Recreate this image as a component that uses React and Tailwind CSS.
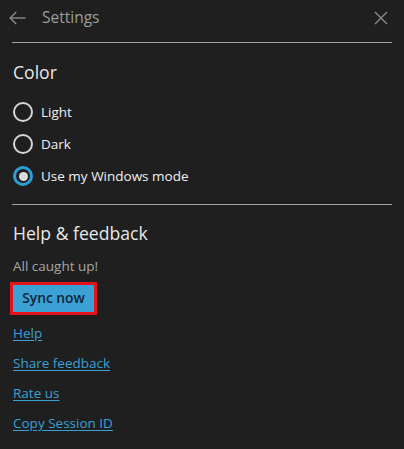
import React, { useState } from "react";

const BackArrow = () => (
  <svg width="17" height="14" viewBox="0 0 17 14" fill="none" stroke="#8c8c8c" strokeWidth="1.4">
    <path d="M16.5 7H1.2" />
    <path d="M7.2 1L1.2 7l6 6" />
  </svg>
);

const CloseIcon = () => (
  <svg width="14" height="14" viewBox="0 0 14 14" fill="none" stroke="#8c8c8c" strokeWidth="1.4">
    <path d="M1 1l12 12M13 1L1 13" />
  </svg>
);

const Radio = ({ checked }) =>
  checked ? (
    <div className="w-5 h-5 rounded-full border-[3px] border-[#2d9fd2] flex items-center justify-center">
      <div className="w-[9px] h-[9px] rounded-full bg-[#dcdcdc]" />
    </div>
  ) : (
    <div className="w-5 h-5 rounded-full border-2 border-[#d6d6d6]" />
  );

const App = () => {
  const [mode, setMode] = useState("windows");

  const options = [
    { key: "light", label: "Light" },
    { key: "dark", label: "Dark" },
    { key: "windows", label: "Use my Windows mode" },
  ];

  const links = ["Help", "Share feedback", "Rate us", "Copy Session ID"];

  return (
    <div className="w-[404px] h-[449px] bg-[#1f1f1f] font-['Open_Sans',sans-serif] overflow-hidden">
      {/* header */}
      <div className="h-9 flex items-center">
        <div className="w-[42px] flex items-center pl-[9px]">
          <BackArrow />
        </div>
        <div className="flex-1 h-full flex items-center text-[15.5px] text-[#9c9c9c]">
          Settings
        </div>
        <div className="w-9 h-full flex items-center justify-center mr-[5px]">
          <CloseIcon />
        </div>
      </div>
      <div className="mt-[6px] mx-3 h-px bg-[#a3a3a3]" />

      {/* color */}
      <div className="px-[13px]">
        <div className="mt-[17px] text-[17.6px] leading-6 text-[#e8e8e8]">Color</div>
        <div className="mt-3 flex flex-col">
          {options.map((o) => (
            <div
              key={o.key}
              className="h-8 flex items-center gap-2 cursor-pointer"
              onClick={() => setMode(o.key)}
            >
              <Radio checked={mode === o.key} />
              <span className="text-[13.5px] text-[#f0f0f0]">{o.label}</span>
            </div>
          ))}
        </div>
      </div>
      <div className="mt-3 mx-3 h-px bg-[#a3a3a3]" />

      {/* help & feedback */}
      <div className="px-[13px]">
        <div className="mt-4 text-[17.6px] leading-6 text-[#e8e8e8]">Help &amp; feedback</div>
        <div className="mt-[11px] text-[13.5px] leading-5 text-[#a6a6a6]">All caught up!</div>
        <button className="mt-[6px] -ml-[3px] w-[87px] h-[33px] flex items-center justify-center border-[3px] border-[#e3131b] bg-[#3ba0d3] text-[13.8px] font-semibold text-[#0f2537]">
          Sync now
        </button>
        <div className="mt-[3px] flex flex-col">
          {links.map((l) => (
            <div key={l} className="h-[30px] flex items-center">
              <a href="#" className="text-[13.5px] text-[#3aa0d6] underline underline-offset-2">
                {l}
              </a>
            </div>
          ))}
        </div>
      </div>
    </div>
  );
};

export default App;
